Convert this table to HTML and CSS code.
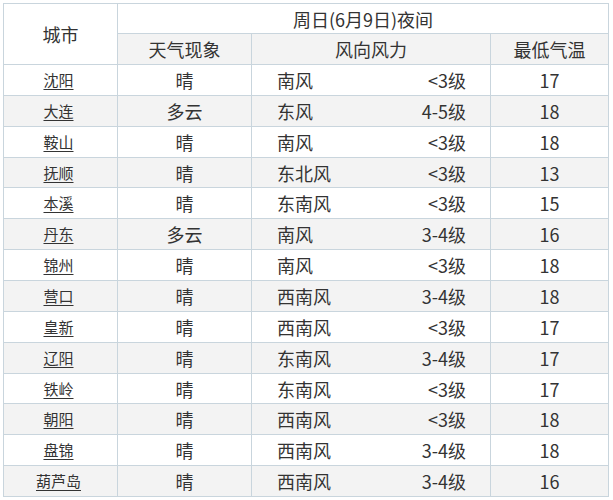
FILE: index.html
```html
<!DOCTYPE html>
<html lang="zh">
<head>
<meta charset="utf-8">
<link rel="stylesheet" href="styles.css">
</head>
<body>
<table class="weather">
  <colgroup>
    <col class="c-city">
    <col class="c-sky">
    <col class="c-dir">
    <col class="c-force">
    <col class="c-temp">
  </colgroup>
  <thead>
    <tr class="h1">
      <th rowspan="2" class="city-h">城市</th>
      <th colspan="4" class="date-h">周日(6月9日)夜间</th>
    </tr>
    <tr class="h2">
      <th>天气现象</th>
      <th colspan="2">风向风力</th>
      <th>最低气温</th>
    </tr>
  </thead>
  <tbody>
    <tr><td class="city"><a href="#">沈阳</a></td><td>晴</td><td class="dir">南风</td><td class="force">&lt;3级</td><td>17</td></tr>
    <tr><td class="city"><a href="#">大连</a></td><td>多云</td><td class="dir">东风</td><td class="force">4-5级</td><td>18</td></tr>
    <tr><td class="city"><a href="#">鞍山</a></td><td>晴</td><td class="dir">南风</td><td class="force">&lt;3级</td><td>18</td></tr>
    <tr><td class="city"><a href="#">抚顺</a></td><td>晴</td><td class="dir">东北风</td><td class="force">&lt;3级</td><td>13</td></tr>
    <tr><td class="city"><a href="#">本溪</a></td><td>晴</td><td class="dir">东南风</td><td class="force">&lt;3级</td><td>15</td></tr>
    <tr><td class="city"><a href="#">丹东</a></td><td>多云</td><td class="dir">南风</td><td class="force">3-4级</td><td>16</td></tr>
    <tr><td class="city"><a href="#">锦州</a></td><td>晴</td><td class="dir">南风</td><td class="force">&lt;3级</td><td>18</td></tr>
    <tr><td class="city"><a href="#">营口</a></td><td>晴</td><td class="dir">西南风</td><td class="force">3-4级</td><td>18</td></tr>
    <tr><td class="city"><a href="#">皇新</a></td><td>晴</td><td class="dir">西南风</td><td class="force">&lt;3级</td><td>17</td></tr>
    <tr><td class="city"><a href="#">辽阳</a></td><td>晴</td><td class="dir">东南风</td><td class="force">3-4级</td><td>17</td></tr>
    <tr><td class="city"><a href="#">铁岭</a></td><td>晴</td><td class="dir">东南风</td><td class="force">&lt;3级</td><td>17</td></tr>
    <tr><td class="city"><a href="#">朝阳</a></td><td>晴</td><td class="dir">西南风</td><td class="force">&lt;3级</td><td>18</td></tr>
    <tr><td class="city"><a href="#">盘锦</a></td><td>晴</td><td class="dir">西南风</td><td class="force">3-4级</td><td>18</td></tr>
    <tr><td class="city"><a href="#">葫芦岛</a></td><td>晴</td><td class="dir">西南风</td><td class="force">3-4级</td><td>16</td></tr>
  </tbody>
</table>
</body>
</html>
```

FILE: styles.css
```css
html, body {
  margin: 0;
  padding: 0;
  background: #ffffff;
}
body {
  padding: 3px 0 0 3px;
  font-family: "Noto Sans CJK SC", "Noto Sans", sans-serif;
  color: #333333;
}
.weather {
  border-collapse: collapse;
  table-layout: fixed;
  width: 605px;
}
.c-city { width: 114px; }
.c-sky { width: 134px; }
.c-dir { width: 119px; }
.c-force { width: 120px; }
.c-temp { width: 118px; }

.weather th,
.weather td {
  border: 1px solid #c9d5dd;
  padding: 0;
  text-align: center;
  font-weight: normal;
  font-size: 18px;
  line-height: 20px;
  white-space: nowrap;
}
.weather .h1 th { height: 29px; background: #ffffff; }
.weather .h2 th { height: 30px; background: #f3f3f3; }
.weather .city-h { background: #ffffff; }
.weather tbody td { height: 29.86px; }
.weather tbody tr:nth-child(even) td { background: #f3f3f3; }

.weather td.dir {
  text-align: left;
  padding-left: 25px;
  border-right: none;
}
.weather td.force {
  text-align: right;
  padding-right: 24px;
  border-left: none;
}
.weather td.city {
  font-size: 15px;
  padding-right: 4px;
}
.weather td.city a {
  color: #333333;
  text-decoration: underline;
  text-underline-offset: 3px;
}
```
